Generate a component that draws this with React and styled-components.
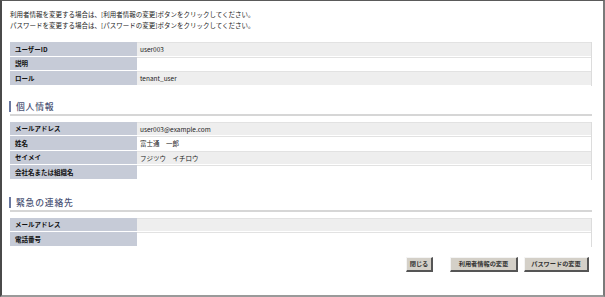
import styled, { createGlobalStyle } from "styled-components";

const GlobalStyle = createGlobalStyle`
  html, body {
    margin: 0;
    padding: 0;
    background: #ffffff;
  }
  body {
    font-family: "Noto Sans CJK JP", "Noto Sans", sans-serif;
    color: #222;
  }
`;

const Frame = styled.div`
  box-sizing: border-box;
  width: 605px;
  height: 297px;
  border-top: 1px solid #5a5a5a;
  border-left: 2px solid #4a4a4a;
  border-right: 2px solid #7a7a7a;
  border-bottom: 2px solid #9a9a9a;
  padding: 0 11px 0 8px;
  display: flex;
  flex-direction: column;
`;

const Intro = styled.div`
  padding-top: 8px;
  font-size: 6.5px;
  line-height: 11px;
  color: #222;
  white-space: nowrap;
`;

const InfoTable = styled.div`
  margin-top: ${(p) => p.$top || 0}px;
  display: flex;
  flex-direction: column;
  border-right: 1px solid #dcdcdc;
`;

const Row = styled.div`
  display: grid;
  grid-template-columns: 127px 1fr;
  height: 13.5px;
  border-bottom: 1px solid #fff;
`;

const Label = styled.div`
  background: #c6cbd7;
  font-size: 6.5px;
  font-weight: 700;
  color: #111;
  padding-left: 5px;
  display: flex;
  align-items: center;
  white-space: nowrap;
`;

const Value = styled.div`
  background: ${(p) => (p.$shade ? "#eeeeee" : "#ffffff")};
  border-top: 1px solid #e2e2e2;
  font-size: 6.5px;
  color: #222;
  padding-left: 3px;
  display: flex;
  align-items: center;
  white-space: nowrap;
`;

const Heading = styled.div`
  margin-top: ${(p) => p.$top}px;
  border-bottom: 2px solid #d6d6d6;
  padding-bottom: 2px;
  margin-bottom: 6px;
`;

const HeadingText = styled.div`
  margin-left: -1px;
  border-left: 2px solid #6a78a0;
  padding-left: 5px;
  height: 11px;
  display: flex;
  align-items: center;
  font-size: 8.8px;
  font-weight: 500;
  letter-spacing: 0.8px;
  color: #4c5476;
`;

const ButtonBar = styled.div`
  margin-top: 10px;
  padding-right: 3px;
  display: flex;
  justify-content: flex-end;
  gap: 6px;
`;

const Button = styled.button`
  box-sizing: border-box;
  width: ${(p) => p.$w}px;
  height: 15px;
  margin-right: ${(p) => p.$gap || 0}px;
  padding: 0;
  background: #d4d0c8;
  border-style: solid;
  border-width: 1px 2px 2px 1px;
  border-color: #f4f4f4 #555 #555 #f4f4f4;
  font-family: "Noto Sans CJK JP", sans-serif;
  font-size: 6.2px;
  font-weight: 700;
  color: #333;
  display: flex;
  align-items: center;
  justify-content: center;
  white-space: nowrap;
`;

const account = [
  ["ユーザーID", "user003"],
  ["説明", ""],
  ["ロール", "tenant_user"],
];

const personal = [
  ["メールアドレス", "user003@example.com"],
  ["姓名", "富士通　一郎"],
  ["セイメイ", "フジツウ　イチロウ"],
  ["会社名または組織名", ""],
];

const emergency = [
  ["メールアドレス", ""],
  ["電話番号", ""],
];

const Table = ({ rows, top }) => (
  <InfoTable $top={top}>
    {rows.map(([label, value], i) => (
      <Row key={label}>
        <Label>{label}</Label>
        <Value $shade={i % 2 === 0}>{value}</Value>
      </Row>
    ))}
  </InfoTable>
);

const App = () => (
  <>
    <GlobalStyle />
    <Frame>
      <Intro>
        利用者情報を変更する場合は、[利用者情報の変更]ボタンをクリックしてください。
        <br />
        パスワードを変更する場合は、[パスワードの変更]ボタンをクリックしてください。
      </Intro>
      <Table rows={account} top={11} />

      <Heading $top={15}>
        <HeadingText>個人情報</HeadingText>
      </Heading>
      <Table rows={personal} />

      <Heading $top={17}>
        <HeadingText>緊急の連絡先</HeadingText>
      </Heading>
      <Table rows={emergency} />

      <ButtonBar>
        <Button $w={27} $gap={11}>閉じる</Button>
        <Button $w={68}>利用者情報の変更</Button>
        <Button $w={65}>パスワードの変更</Button>
      </ButtonBar>
    </Frame>
  </>
);

export default App;
